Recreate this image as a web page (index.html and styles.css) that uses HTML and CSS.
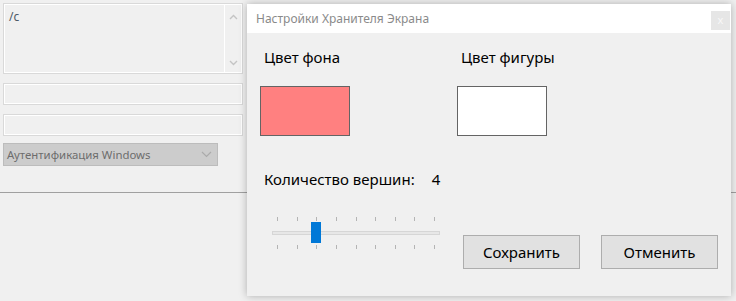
FILE: index.html
```html
<!DOCTYPE html>
<html lang="ru">
<head>
    <meta charset="UTF-8">
    <meta name="viewport" content="width=device-width, initial-scale=1.0">
    <title>Настройки Хранителя Экрана</title>
    <link rel="stylesheet" href="styles.css">
</head>
<body>
    <div class="app">
        <div class="memo">
            <div class="memo-text">/c</div>
            <div class="memo-scroll">
                <svg width="9" height="6" viewBox="0 0 9 6"><path d="M1 5 L4.5 1.5 L8 5" fill="none" stroke="#c4c4c4" stroke-width="1.4"/></svg>
                <svg width="9" height="6" viewBox="0 0 9 6"><path d="M1 1 L4.5 4.5 L8 1" fill="none" stroke="#c4c4c4" stroke-width="1.4"/></svg>
            </div>
        </div>
        <div class="field"></div>
        <div class="field"></div>
        <div class="combo">
            <span>Аутентификация Windows</span>
            <svg width="11" height="7" viewBox="0 0 11 7"><path d="M1 1 L5.5 5.5 L10 1" fill="none" stroke="#ababab" stroke-width="1.2"/></svg>
        </div>
        <div class="divider"></div>
    </div>

    <div class="dialog">
        <div class="dialog-title">
            <span>Настройки Хранителя Экрана</span>
            <div class="close">x</div>
        </div>
        <div class="dialog-body">
            <div class="colors">
                <div class="color-col">
                    <div class="label">Цвет фона</div>
                    <div class="swatch back"></div>
                </div>
                <div class="color-col">
                    <div class="label">Цвет фигуры</div>
                    <div class="swatch shape"></div>
                </div>
            </div>
            <div class="count">
                <span>Количество вершин:</span>
                <span class="count-value">4</span>
            </div>
            <div class="bottom">
                <div class="slider">
                    <div class="ticks">
                        <i></i><i></i><i></i><i></i><i></i><i></i><i></i><i></i><i></i>
                    </div>
                    <div class="track"></div>
                    <div class="ticks">
                        <i></i><i></i><i></i><i></i><i></i><i></i><i></i><i></i><i></i>
                    </div>
                    <div class="thumb"></div>
                </div>
                <div class="buttons">
                    <button type="button">Сохранить</button>
                    <button type="button">Отменить</button>
                </div>
            </div>
        </div>
    </div>
</body>
</html>
```

FILE: styles.css
```css
body {
    margin: 0;
    padding: 0;
    background-color: #f0f0f0;
    font-family: "Noto Sans", "Open Sans", sans-serif;
    width: 736px;
    height: 301px;
    overflow: hidden;
    position: relative;
}
.app {
    padding-top: 3px;
}
.memo {
    display: flex;
    width: 238px;
    height: 69px;
    margin-left: 3px;
    border: 1px solid #d9d9d9;
    box-shadow: inset 0 0 0 1px #fff;
}
.memo-text {
    flex: 1;
    padding: 4px 0 0 5px;
    font-size: 12px;
    color: #4d5a66;
}
.memo-scroll {
    width: 17px;
    border-left: 1px solid #fff;
    display: flex;
    flex-direction: column;
    justify-content: space-between;
    align-items: center;
    padding: 10px 0 7px;
}
.field {
    width: 238px;
    height: 20px;
    margin: 9px 0 0 3px;
    border: 1px solid #d9d9d9;
    box-shadow: inset 0 0 0 1px #fff;
}
.combo {
    display: flex;
    align-items: center;
    justify-content: space-between;
    width: 205px;
    height: 21px;
    margin: 7px 0 0 3px;
    padding: 0 5px 0 3px;
    border: 1px solid #bcbcbc;
    background-color: #cccccc;
    color: #6d6d6d;
    font-size: 11.4px;
}
.divider {
    margin-top: 26px;
    height: 1px;
    background-color: #a0a0a0;
}

/* окно настроек поверх формы */
.dialog {
    position: absolute;
    left: 247px;
    top: 4px;
    width: 484px;
    height: 292px;
    background-color: #f0f0f0;
    box-shadow: 0 0 8px rgba(0, 0, 0, 0.28);
}
.dialog-title {
    height: 29px;
    background-color: #fff;
    display: flex;
    align-items: center;
    justify-content: space-between;
    padding-left: 9px;
    font-size: 12px;
    color: #8a8a8a;
}
.close {
    width: 19px;
    height: 19px;
    margin: 7px 1px 0 0;
    align-self: flex-start;
    background-color: #e6e6e6;
    color: #f8f8f8;
    font-size: 11px;
    line-height: 18px;
    text-align: center;
}
.dialog-body {
    padding: 14px 13px 0 13px;
    color: #000;
    font-size: 15px;
}
.colors {
    display: flex;
}
.color-col {
    width: 197px;
}
.label {
    line-height: 20px;
    padding-left: 4px;
}
.swatch {
    width: 88px;
    height: 48px;
    margin-top: 19px;
    border: 1px solid #646464;
}
.back {
    background-color: #ff8080;
}
.shape {
    background-color: #fff;
}
.count {
    margin-top: 33px;
    line-height: 20px;
    padding-left: 4px;
    display: flex;
}
.count-value {
    margin-left: 17px;
}
.bottom {
    display: flex;
    margin-top: 28px;
}
.slider {
    position: relative;
    width: 168px;
    margin-left: 12px;
}
.ticks {
    display: flex;
    justify-content: space-between;
    padding: 0 5px;
    height: 4px;
}
.ticks i {
    width: 1px;
    background-color: #b4b4b4;
}
.track {
    height: 2px;
    margin: 10px 0;
    border: 1px solid #d6d6d6;
    background-color: #e7e7e7;
}
.thumb {
    position: absolute;
    left: 39px;
    top: 5px;
    width: 10px;
    height: 21px;
    background-color: #0078d7;
}
.buttons {
    display: flex;
    gap: 21px;
    margin: 18px 0 0 auto;
}
button {
    width: 117px;
    height: 34px;
    background-color: #e1e1e1;
    border: 1px solid #adadad;
    font-family: inherit;
    font-size: 15px;
    color: #000;
    padding: 0;
}
```
